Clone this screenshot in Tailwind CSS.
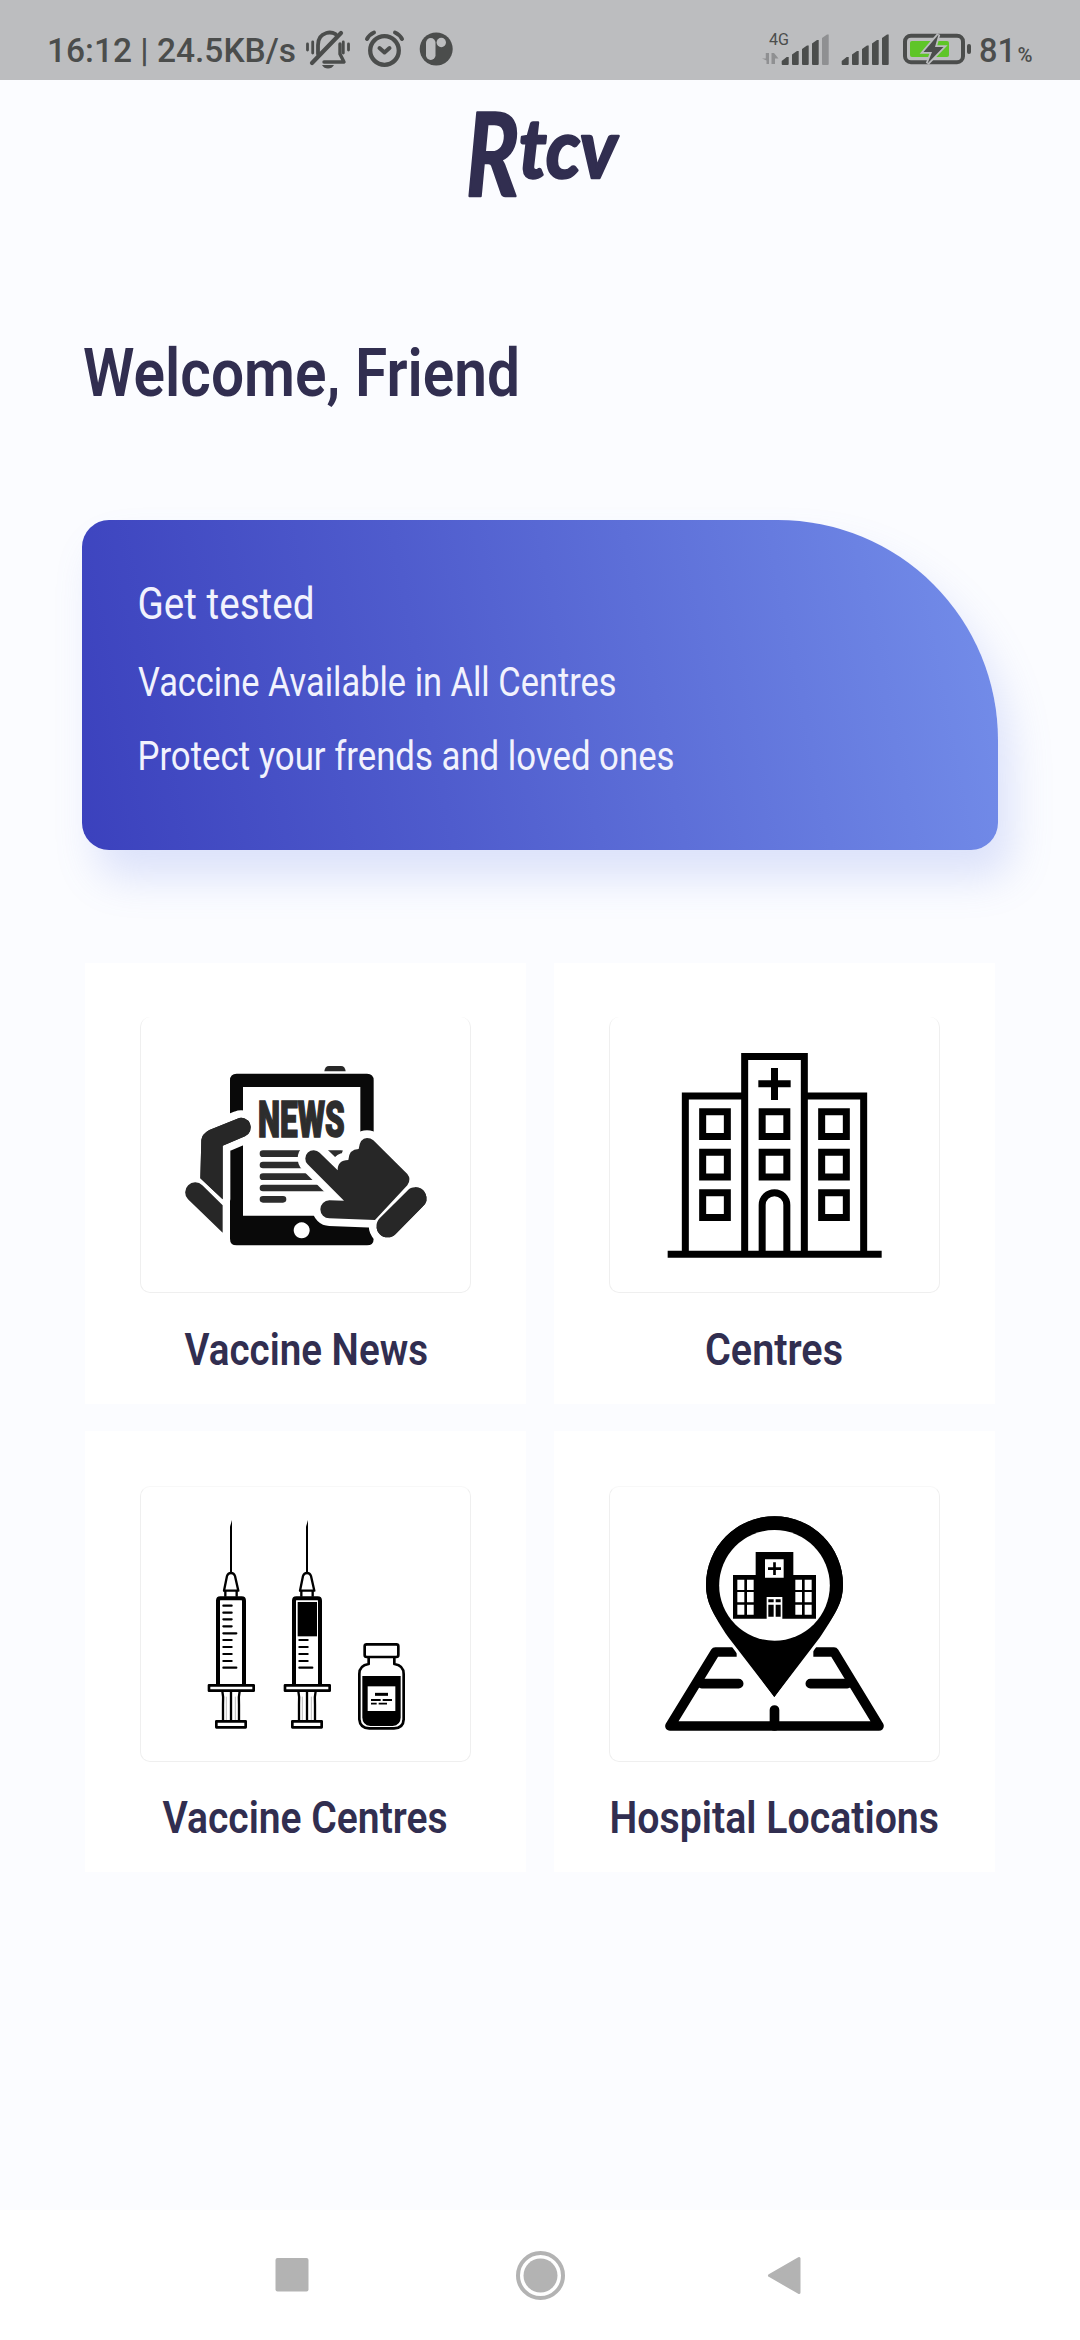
<!DOCTYPE html>
<html lang="en">
<head>
<meta charset="utf-8">
<title>Rtcv</title>
<script src="https://cdn.jsdelivr.net/npm/@tailwindcss/browser@4"></script>
</head>
<body class="flex h-[2340px] w-[1080px] flex-col overflow-hidden bg-[#fbfcff] font-[Roboto,sans-serif] text-[#312e50]">

<!-- Status bar -->
<header class="flex h-20 shrink-0 items-start bg-[#bcbdbf] text-[#4b4d4c]">
  <svg class="ml-12 h-20 w-[250px] overflow-visible" viewBox="48 0 250 80" fill="currentColor"><text x="47" y="62" font-size="34" font-weight="480" textLength="249" lengthAdjust="spacingAndGlyphs">16:12 | 24.5KB/s</text></svg>
  <svg class="ml-[6px] h-20 w-[49px]" viewBox="303 0 49 80" fill="none" stroke="currentColor" stroke-linecap="round" stroke-linejoin="round">
    <path d="M317 54V45c0-14 16-15 19-9" stroke-width="3.8"/>
    <path d="M311 63L340 33" stroke-width="4.2"/>
    <path d="M339 44v10l4 8h-20" stroke-width="3.4"/>
    <path d="M321 65h12q-2 3.600-6 3.600t-6-3.600z" fill="currentColor" stroke="none"/>
    <path d="M306.500 44v6M311.700 42v11M342.300 42v11M347.500 44v6" stroke-width="2.800"/>
  </svg>
  <svg class="ml-2.5 h-20 w-[44px]" viewBox="362 0 44 80" fill="none" stroke="currentColor" stroke-linecap="round" stroke-linejoin="round">
    <circle cx="383.500" cy="50.500" r="14.300" stroke-width="4.300"/>
    <path d="M378.500 48l5 4.500 5-4.500" stroke-width="4"/>
    <path d="M366 39q2.500-4.500 7-6.500M401 39q-2.500-4.500-7-6.500" stroke-width="4"/>
  </svg>
  <svg class="ml-[11px] h-20 w-9" viewBox="417 0 36 80">
    <ellipse cx="435.200" cy="49" rx="16.500" ry="16.600" fill="currentColor"/>
    <rect x="425" y="38" width="9.500" height="22" rx="4.750" fill="#bcbdbf"/>
    <circle cx="440.300" cy="42.500" r="4.700" fill="#bcbdbf"/>
  </svg>
  <svg class="ml-auto mr-12 h-20 w-[272px] overflow-visible" viewBox="760 0 272 80" fill="currentColor">
    <text x="769" y="44.500" font-size="17" textLength="20" lengthAdjust="spacingAndGlyphs">4G</text>
    <path d="M769 53v11h-2.500v-3.500L762 58.500h3.800V53zM771.500 64V53h2.500l4.500 5.500H775V64z" fill="#8f9092"/>
    <g id="bars">
      <path d="M781.700 64v-3l5-4h2v7q0 1-1 1h-5q-1 0-1-1zM792 64V54.500l5-3.500h1.700v13q0 1-1 1H793q-1 0-1-1zM802 64V49l5-3.500h1.700V64q0 1-1 1H803q-1 0-1-1zM812 64V43.500l5-3.500h1.700v24q0 1-1 1H813q-1 0-1-1z"/>
    </g>
    <path d="M822 64V38l5-3.500h1.700V64q0 1-1 1H823q-1 0-1-1z" fill="#8f9092"/>
    <use href="#bars" x="60"/>
    <path d="M882 64V38l5-3.500h1.700V64q0 1-1 1H883q-1 0-1-1z"/>
    <rect x="905" y="35.700" width="58" height="26.500" rx="6" fill="none" stroke="currentColor" stroke-width="4"/>
    <rect x="910" y="41" width="39" height="16" rx="2" fill="#5fc528"/>
    <path d="M967 46q0-2 2-2t2 2v6q0 2-2 2t-2-2z"/>
    <path d="M938.500 34.500L923.500 52h8.500l-4.500 11.500L943.500 47H935z" stroke="#bcbdbf" stroke-width="3.500" paint-order="stroke"/>
    <text x="979" y="62" font-size="34" font-weight="480" textLength="37" lengthAdjust="spacingAndGlyphs">81</text>
    <text x="1017.500" y="62" font-size="21" font-weight="480" textLength="15" lengthAdjust="spacingAndGlyphs">%</text>
  </svg>
</header>

<main class="flex grow flex-col">
  <!-- Wordmark -->
  <svg class="mx-auto mt-5 h-[110px] w-[180px] overflow-visible" viewBox="450 100 180 110" fill="currentColor" stroke="currentColor" stroke-linejoin="round" stroke-width="2.500">
    <text font-family="Lato, sans-serif" font-style="italic" font-weight="700"><tspan x="466" y="196" font-size="114" textLength="53" lengthAdjust="spacingAndGlyphs">R</tspan><tspan x="519" y="178" font-size="82" textLength="98" lengthAdjust="spacingAndGlyphs">tcv</tspan></text>
  </svg>

  <!-- Greeting -->
  <svg class="ml-20 mt-[120px] h-[90px] w-[450px] shrink-0 overflow-visible" viewBox="80 330 450 90" fill="currentColor" role="heading"><text x="83" y="396" font-size="66" font-weight="650" textLength="437" lengthAdjust="spacingAndGlyphs">Welcome, Friend</text></svg>

  <!-- Promo card -->
  <section class="mx-[82px] mt-[100px] h-[330px] shrink-0 rounded-[27px] rounded-tr-[220px] bg-[linear-gradient(79deg,#3b41bd_0%,#4f5ccd_38%,#748eea_100%)] pl-[50px] pt-10 text-[#f1f2fd] shadow-[14px_28px_40px_rgba(115,138,230,0.22)]">
    <svg class="h-[250px] w-[560px] overflow-visible" viewBox="132 560 560 250" fill="currentColor">
      <text x="137.500" y="618.500" font-size="44" font-weight="370" textLength="177" lengthAdjust="spacingAndGlyphs">Get tested</text>
      <text x="138" y="696" font-size="40" font-weight="370" textLength="478.500" lengthAdjust="spacingAndGlyphs">Vaccine Available in All Centres</text>
      <text x="137.500" y="770" font-size="40" font-weight="370" textLength="537" lengthAdjust="spacingAndGlyphs">Protect your frends and loved ones</text>
    </svg>
  </section>

  <!-- Menu tiles -->
  <section class="mt-[113px] grid grid-cols-[441px_441px] justify-center gap-x-7 gap-y-[27px]">
    <article class="flex h-[441px] flex-col items-center bg-white pt-[54px]">
      <div class="h-[276px] w-[331px] rounded-[10px] border-x border-b border-[#efefef]">
        <svg class="-ml-px h-[276px] w-[331px]" viewBox="30 21 993 828" fill="#272727">
          <path d="M583 184q2-16 14-16h36q12 0 14 16z"/>
          <path fill-rule="evenodd" fill="#090909" d="M320 191H711q20 0 20 20V686q0 20-20 20H320q-20 0-20-20V211q0-20 20-20zM339 231V617H691V231zM515 637a24 24 0 1 0 .1 0z"/>
          <text x="384" y="382" font-size="152" font-weight="900" fill="#2d2d2d" stroke="#2d2d2d" stroke-width="5" textLength="260" lengthAdjust="spacingAndGlyphs">NEWS</text>
          <path d="M399 431H633M399 465H560M399 500H580M399 534H600M399 568H459" fill="none" stroke="#2d2d2d" stroke-width="20" stroke-linecap="round"/>
          <g stroke="#fff" stroke-width="46" stroke-linejoin="round" paint-order="stroke">
            <path d="M211 505L214 390q2-18 24-30L322 326A28 28 0 0 1 345 379L278 407V568z"/>
            <path d="M855 532a33 33 0 0 1 24 57L797 672A33 33 0 0 1 749 625L832 542q10-10 23-10z"/>
            <path d="M569 428L623 481Q622 451 655 450Q657 417 686 417Q690 384 711 384Q722 384 730 391L832 492Q845 508 832 526L735 630L598 625A27 27 0 0 1 598 571L642 572L533 463A25 25 0 0 1 569 428z"/>
          </g>
          <path d="M211 505L214 390q2-18 24-30L322 326A28 28 0 0 1 345 379L278 407V568z"/>
          <path d="M217 526L278 586V668L174 568A30 30 0 0 1 217 526z"/>
          <path d="M855 532a33 33 0 0 1 24 57L797 672A33 33 0 0 1 749 625L832 542q10-10 23-10z"/>
        </svg>
      </div>
      <svg class="mt-7 h-[60px] w-[400px]" viewBox="105.500 1321 400 60" fill="currentColor"><text x="184" y="1364.500" font-size="43.500" font-weight="620" textLength="243.500" lengthAdjust="spacingAndGlyphs">Vaccine News</text></svg>
    </article>

    <article class="flex h-[441px] flex-col items-center bg-white pt-[54px]">
      <div class="h-[276px] w-[331px] rounded-[10px] border-x border-b border-[#efefef]">
        <svg class="-ml-px h-[276px] w-[331px]" viewBox="27 21 993 828" fill="none" stroke="#000" stroke-width="21">
          <path d="M203 733H845M256 733V258H434M613 258H791V733M434 733V139.500H613V733M523.500 174V270M475 221.500H572M486.500 733V585a37 37 0 0 1 74 0V733"/>
          <path d="M308 305.500h74v74h-74zM308 427h74v74h-74zM308 548.500h74v74h-74zM486.500 305.500h74v74h-74zM486.500 427h74v74h-74zM665 305.500h74v74h-74zM665 427h74v74h-74zM665 548.500h74v74h-74z"/>
        </svg>
      </div>
      <svg class="mt-7 h-[60px] w-[400px]" viewBox="574.500 1321 400 60" fill="currentColor"><text x="704.500" y="1364.500" font-size="43.500" font-weight="620" textLength="138" lengthAdjust="spacingAndGlyphs">Centres</text></svg>
    </article>

    <article class="flex h-[441px] flex-col items-center bg-white pt-[55px]">
      <div class="h-[276px] w-[331px] rounded-[10px] border border-[#efefef] border-t-[#f8f8f8]">
        <svg class="-ml-px -mt-px h-[276px] w-[331px]" viewBox="30 18 993 828" fill="none" stroke="#000" stroke-linejoin="round">
          <g id="syringe">
            <path d="M306 120V278H300V140z" fill="#000" stroke="none"/>
            <path d="M282 332L291 288Q294 279 303 279T315 288L325 332zM286 335V350M320 335V350" stroke-width="7"/>
            <path d="M264 613V362q0-7 7-7H335q7 0 7 7V613" stroke-width="12"/>
            <rect x="237" y="616" width="134" height="16" stroke-width="8"/>
            <path d="M277 634q4 16 2 40V720M329 634q-4 16-2 40V720" stroke-width="7"/>
            <path d="M303 634V720" stroke-width="7"/><path d="M289 650V720M316 650V720" stroke="#999" stroke-width="2"/>
            <rect x="259" y="724" width="88" height="18" stroke-width="8"/>
            <path d="M280 480H305M280 501H305M280 522H305M280 543H305M280 563H319" stroke-width="6.500" stroke-linecap="round"/>
          </g>
          <path d="M280 377H305M280 398H305M280 418H305M280 439H305M280 460H319" stroke-width="6.500" stroke-linecap="round"/>
          <use href="#syringe" x="228"/>
          <rect x="503" y="366" width="58" height="103" fill="#000" stroke="none"/>
          <rect x="704" y="493" width="101" height="38" rx="6" stroke-width="8"/>
          <path d="M716 533V552Q688 556 688 582V718Q690 744 718 745H792Q820 744 821 718V582Q821 556 793 552V533" stroke-width="8"/>
          <path d="M697 588H812V712Q812 736 788 738H721Q697 736 697 712z" fill="#000" stroke="none"/>
          <path d="M713 619H796V693H713z" fill="#fff" stroke="none"/>
          <path d="M735 643H774" stroke-width="9"/><path d="M723 660H752M758 660H786" stroke-width="6"/><path d="M723 671H740M746 671H771" stroke-width="5"/>
        </svg>
      </div>
      <svg class="mt-7 h-[60px] w-[400px]" viewBox="105.500 1790 400 60" fill="currentColor"><text x="162" y="1832.800" font-size="43.500" font-weight="620" textLength="285" lengthAdjust="spacingAndGlyphs">Vaccine Centres</text></svg>
    </article>

    <article class="flex h-[441px] flex-col items-center bg-white pt-[55px]">
      <div class="h-[276px] w-[331px] rounded-[10px] border border-[#efefef] border-t-[#f8f8f8]">
        <svg class="-ml-px -mt-px h-[276px] w-[331px]" viewBox="27 18 993 828">
          <g fill="none" stroke="#000" stroke-width="29" stroke-linejoin="round">
            <path d="M410 516H346L210 738H837L702 516H640"/>
            <path d="M305 611H416M742 611H631M523.500 738V690" stroke-linecap="round"/>
          </g>
          <path d="M523 651L372 446C340 402 318 368 318 314a205.500 205.500 0 0 1 411 0C729 368 705 402 673 446z" fill="#000" stroke="#fff" stroke-width="26" paint-order="stroke"/>
          <path d="M523 651L385 472C340 402 318 368 318 314a205.500 205.500 0 0 1 411 0C729 368 705 402 660 472z"/>
          <circle cx="523.500" cy="316" r="166" fill="#fff"/>
          <path d="M467 216H580V285H648V416H399V285H467z"/>
          <path fill="#fff" d="M495 238h56v55h-56zM412 299h21v31h-21zM441 299h20v31h-20zM412 336h21v31h-21zM441 336h20v31h-20zM412 374h21v30h-21zM441 374h20v30h-20zM586 299h20v31h-20zM614 299h21v31h-21zM586 336h20v31h-20zM614 336h21v31h-21zM586 374h20v30h-20zM614 374h21v30h-21zM500 351h47v66h-47z"/>
          <path d="M505 358h16v9h-16zM527 358h15v9h-15zM505 374h16v36h-16zM527 374h15v36h-15z"/>
          <path d="M504 266H543M523.500 247V285" stroke="#000" stroke-width="8"/>
        </svg>
      </div>
      <svg class="mt-7 h-[60px] w-[400px]" viewBox="574.500 1790 400 60" fill="currentColor"><text x="609" y="1832.800" font-size="43.500" font-weight="620" textLength="329.500" lengthAdjust="spacingAndGlyphs">Hospital Locations</text></svg>
    </article>
  </section>
</main>

<!-- Navigation bar -->
<nav class="flex h-[130px] shrink-0 items-center bg-white pl-[275px]">
  <svg class="h-[50px] w-[34px]" viewBox="0 0 34 50" fill="#b3b3b3"><rect x=".5" y="8" width="33" height="33.500" rx="2"/></svg>
  <svg class="ml-[206px] h-[50px] w-[50px]" viewBox="0 0 50 50" fill="#b3b3b3"><circle cx="25.500" cy="25.500" r="22.500" fill="none" stroke="#b3b3b3" stroke-width="4"/><circle cx="25.500" cy="25.500" r="17"/></svg>
  <svg class="ml-[202px] h-[50px] w-[34px]" viewBox="0 0 34 50" fill="#b3b3b3" stroke="#b3b3b3" stroke-width="3" stroke-linejoin="round"><path d="M2.500 25.500L32 8.500V42.500z"/></svg>
</nav>
</body>
</html>
